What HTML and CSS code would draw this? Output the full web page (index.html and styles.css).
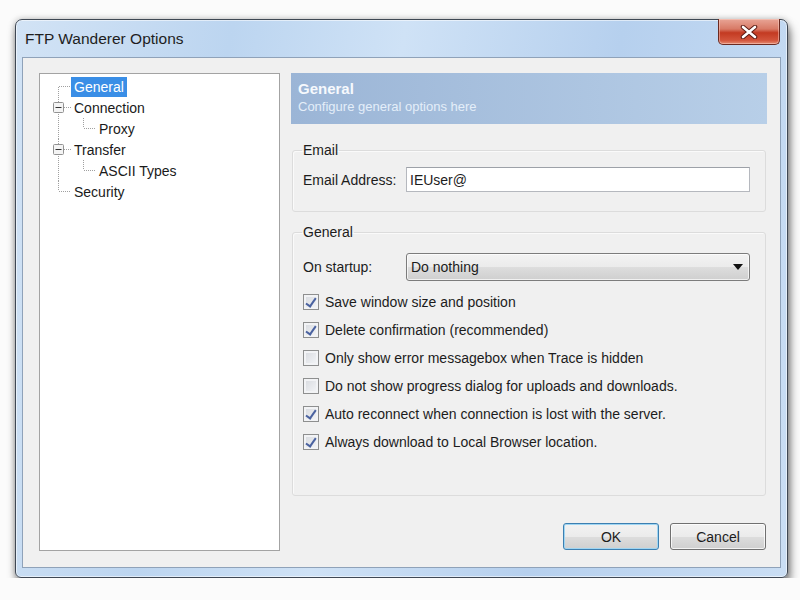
FILE: index.html
```html
<!DOCTYPE html>
<html lang="en">
<head>
    <meta charset="UTF-8">
    <title>FTP Wanderer Options</title>
    <link rel="stylesheet" href="styles.css">
</head>
<body>
    <div class="window">
        <div class="titlebar">
            <span class="title">FTP Wanderer Options</span>
            <div class="close">
                <svg width="18" height="14" viewBox="0 0 18 14">
                    <path d="M3 2 L15 12 M15 2 L3 12" stroke="#5a1a12" stroke-width="4.5" stroke-linecap="round"/>
                    <path d="M3 2 L15 12 M15 2 L3 12" stroke="#fff" stroke-width="2.6" stroke-linecap="round"/>
                </svg>
            </div>
        </div>
        <div class="client">
            <div class="tree">
                <div class="row">
                    <svg class="gut" width="31" height="21"><path d="M18.5 11V21 M19 10.5H31" /></svg>
                    <span class="label selected">General</span>
                </div>
                <div class="row">
                    <svg class="gut" width="31" height="21">
                        <path d="M18.5 0V5 M18.5 17V21 M24 10.5H31" />
                        <rect class="exp" x="13.5" y="5.5" width="10" height="10" rx="1"/>
                        <path class="minus" d="M15.5 10.5H21.5"/>
                    </svg>
                    <span class="label">Connection</span>
                </div>
                <div class="row">
                    <svg class="gut" width="56" height="21"><path d="M18.5 0V21 M43.5 0V10 M44 10.5H56" /></svg>
                    <span class="label">Proxy</span>
                </div>
                <div class="row">
                    <svg class="gut" width="31" height="21">
                        <path d="M18.5 0V5 M18.5 17V21 M24 10.5H31" />
                        <rect class="exp" x="13.5" y="5.5" width="10" height="10" rx="1"/>
                        <path class="minus" d="M15.5 10.5H21.5"/>
                    </svg>
                    <span class="label">Transfer</span>
                </div>
                <div class="row">
                    <svg class="gut" width="56" height="21"><path d="M18.5 0V21 M43.5 0V10 M44 10.5H56" /></svg>
                    <span class="label">ASCII Types</span>
                </div>
                <div class="row">
                    <svg class="gut" width="31" height="21"><path d="M18.5 0V10 M19 10.5H31" /></svg>
                    <span class="label">Security</span>
                </div>
            </div>

            <div class="page">
                <div class="page-head">
                    <div class="head-title">General</div>
                    <div class="head-sub">Configure general options here</div>
                </div>

                <fieldset class="group email-group">
                    <legend>Email</legend>
                    <div class="field">
                        <span class="field-label">Email Address:</span>
                        <input class="text-input" type="text" value="IEUser@">
                    </div>
                </fieldset>

                <fieldset class="group general-group">
                    <legend>General</legend>
                    <div class="field">
                        <span class="field-label">On startup:</span>
                        <div class="combo">
                            <span>Do nothing</span>
                            <svg width="10" height="6" viewBox="0 0 10 6"><path d="M0 0H10L5 6Z" fill="#111"/></svg>
                        </div>
                    </div>
                    <div class="checks">
                        <label class="check"><span class="box on"></span>Save window size and position</label>
                        <label class="check"><span class="box on"></span>Delete confirmation (recommended)</label>
                        <label class="check"><span class="box"></span>Only show error messagebox when Trace is hidden</label>
                        <label class="check"><span class="box"></span>Do not show progress dialog for uploads and downloads.</label>
                        <label class="check"><span class="box on"></span>Auto reconnect when connection is lost with the server.</label>
                        <label class="check"><span class="box on"></span>Always download to Local Browser location.</label>
                    </div>
                </fieldset>

                <div class="buttons">
                    <button class="btn default">OK</button>
                    <button class="btn">Cancel</button>
                </div>
            </div>
        </div>
    </div>
</body>
</html>
```
FILE: styles.css
```css
* {
    box-sizing: border-box;
}

body {
    margin: 0;
    background-color: #fbfbfb;
    font-family: "Liberation Sans", Arial, sans-serif;
    font-size: 14px;
    color: #1c1c1c;
}

.window {
    width: 773px;
    height: 559px;
    margin: 19px 0 0 15px;
    padding: 0 6px 9px;
    display: flex;
    flex-direction: column;
    border: 1px solid #3f4854;
    border-radius: 7px 7px 6px 6px;
    background: linear-gradient(100deg, #d2e3f5 0%, #bcd5f0 25%, #cfe2f6 45%, #b6d0ee 70%, #cadef4 100%);
    box-shadow: inset 0 0 0 1px rgba(255, 255, 255, 0.55), 2px 7px 10px rgba(0, 0, 0, 0.5), 0 0 6px rgba(0, 0, 0, 0.25);
}

.titlebar {
    height: 37px;
    display: flex;
    align-items: center;
    padding-left: 3px;
}

.title {
    font-size: 15.5px;
    color: #1e1e1e;
}

.close {
    margin-left: auto;
    margin-top: -1px;
    margin-right: 1px;
    align-self: flex-start;
    width: 62px;
    height: 26px;
    display: flex;
    align-items: center;
    justify-content: center;
    border: 1px solid #6b2a21;
    border-top: none;
    border-radius: 0 0 5px 5px;
    background: linear-gradient(#e8a596 0%, #d87a66 40%, #c33a22 55%, #d2543b 85%, #e58b72 100%);
    box-shadow: inset 0 0 0 1px rgba(255, 220, 210, 0.45);
}

.client {
    flex: 1;
    display: flex;
    gap: 11px;
    padding: 15px 13px 16px 16px;
    border: 1px solid #8fa2b9;
    background-color: #f0f0f0;
}

/* tree */
.tree {
    width: 241px;
    border: 1px solid #a3a3a3;
    background-color: white;
    padding-top: 2px;
}

.row {
    height: 21px;
    display: flex;
    align-items: center;
}

.gut {
    flex: none;
    fill: none;
    stroke: #a0a0a0;
    stroke-dasharray: 1 1;
}

.gut .exp {
    stroke: #929292;
    stroke-dasharray: none;
    fill: #f4f4f4;
}

.gut .minus {
    stroke: #333;
    stroke-dasharray: none;
}

.label {
    padding: 0 3px;
    line-height: 20px;
    color: #1a1a1a;
}

.label.selected {
    background-color: #3a8ee6;
    color: white;
}

/* right page */
.page {
    width: 476px;
    display: flex;
    flex-direction: column;
}

.page-head {
    height: 51px;
    padding: 6px 7px;
    background: linear-gradient(to right, #9bb5d6, #b8cfe8);
}

.head-title {
    font-size: 15px;
    font-weight: bold;
    line-height: 19px;
    color: #f6f9fd;
}

.head-sub {
    font-size: 13px;
    line-height: 18px;
    color: #e4eef9;
}

.group {
    margin: 0 1px;
    border: 1px solid #dcdcdc;
    border-radius: 3px;
    padding: 0 15px 0 10px;
    box-shadow: inset 1px 1px 0 #fafafa;
}

.group legend {
    padding: 0 1px;
    margin-left: -1px;
    line-height: 16px;
}

.email-group {
    margin-top: 18px;
    padding-top: 9px;
    padding-bottom: 19px;
}

.general-group {
    margin-top: 12px;
    padding-top: 13px;
    padding-bottom: 39px;
}

.field {
    display: flex;
    align-items: center;
}

.field-label {
    width: 103px;
    flex: none;
}

.text-input {
    flex: 1;
    height: 25px;
    padding: 0 3px;
    border: 1px solid #b5b8be;
    border-top-color: #9da1a8;
    background-color: white;
    font-family: "Liberation Sans", Arial, sans-serif;
    font-size: 14px;
    color: #1c1c1c;
    outline: none;
}

.combo {
    flex: 1;
    height: 28px;
    display: flex;
    align-items: center;
    justify-content: space-between;
    padding: 0 6px 0 4px;
    border: 1px solid #7c7c7c;
    border-radius: 3px;
    background: linear-gradient(#f3f3f3 0%, #ebebeb 50%, #dddddd 51%, #cfcfcf 100%);
    box-shadow: inset 0 0 0 1px rgba(255, 255, 255, 0.7);
}

.checks {
    margin-top: 7px;
}

.check {
    height: 28px;
    display: flex;
    align-items: center;
    gap: 6px;
}

.box {
    width: 16px;
    height: 16px;
    flex: none;
    border: 1px solid #8e8f8f;
    background: linear-gradient(135deg, #d6d9de, #f5f6f8);
    box-shadow: inset 0 0 0 2px #f2f3f5;
    display: flex;
    align-items: center;
    justify-content: center;
}

.box.on::after {
    content: "";
    width: 4px;
    height: 9px;
    margin-top: -2px;
    border: solid #4a62a0;
    border-width: 0 2px 2px 0;
    transform: rotate(35deg);
}

.buttons {
    margin-top: auto;
    margin-bottom: 1px;
    display: flex;
    justify-content: flex-end;
    gap: 11px;
    padding-right: 1px;
}

.btn {
    width: 96px;
    height: 27px;
    border: 1px solid #707070;
    border-radius: 3px;
    background: linear-gradient(#f2f2f2 0%, #ebebeb 50%, #dddddd 51%, #cfcfcf 100%);
    box-shadow: inset 0 0 0 1px rgba(255, 255, 255, 0.75);
    font-family: "Liberation Sans", Arial, sans-serif;
    font-size: 14px;
    color: #1c1c1c;
}

.btn.default {
    border-color: #3c7fb1;
    box-shadow: inset 0 0 0 1px #9fd5f2;
}
```
